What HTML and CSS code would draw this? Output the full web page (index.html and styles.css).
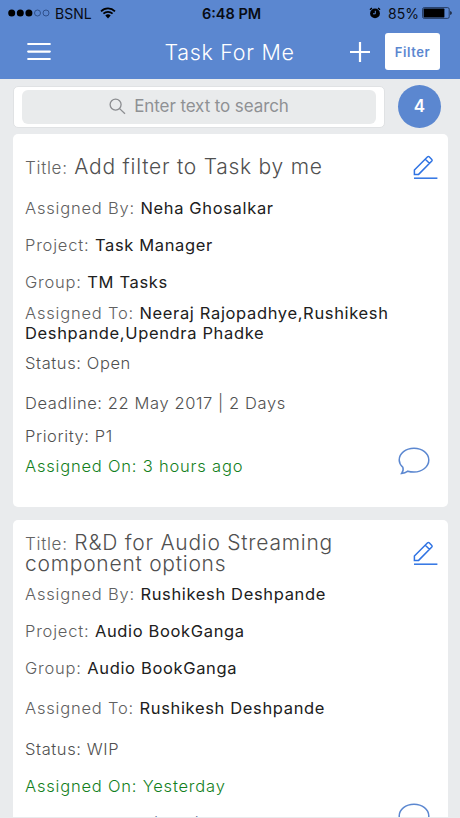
FILE: index.html
```html
<!DOCTYPE html>
<html lang="en">

<head>
    <meta charset="UTF-8">
    <meta name="viewport" content="width=device-width, initial-scale=1.0">
    <title>Task For Me</title>
    <link rel="stylesheet" href="styles.css">
</head>

<body>

    <header class="header">
        <div class="status-bar">
            <div class="status-left">
                <svg class="signal" width="42" height="8" viewBox="0 0 42 8">
                    <circle cx="3.7" cy="4" r="3.5" />
                    <circle cx="12.3" cy="4" r="3.5" />
                    <circle cx="20.9" cy="4" r="3.5" />
                    <circle class="empty" cx="29.5" cy="4" r="3" />
                    <circle class="empty" cx="38" cy="4" r="3" />
                </svg>
                <span class="carrier">BSNL</span>
                <svg class="wifi" width="16" height="12" viewBox="0 0 16 12">
                    <path d="M1 4.3a10 10 0 0 1 14 0M3.4 6.7a6.6 6.6 0 0 1 9.2 0" />
                    <path class="dot" d="M5.3 8.6a3.9 3.9 0 0 1 5.4 0L8 11.4z" />
                </svg>
            </div>
            <span class="clock">6:48 PM</span>
            <div class="status-right">
                <svg class="alarm" width="12" height="12" viewBox="0 0 12 12">
                    <circle cx="6" cy="6.4" r="4.9" />
                    <path class="bells" d="M1 2.7l1.9-1.7M11 2.7L9.1 1" />
                    <path class="hands" d="M6.3 3.8v3H4" />
                </svg>
                <span class="percent">85%</span>
                <svg class="battery" width="31" height="12" viewBox="0 0 31 12">
                    <rect class="shell" x="0.6" y="0.6" width="26.6" height="10.8" rx="1.6" />
                    <rect x="1.6" y="1.6" width="20.8" height="8.8" rx="0.6" />
                    <path d="M28.4 4c1.6.5 1.6 3.5 0 4z" />
                </svg>
            </div>
        </div>
        <div class="nav-bar">
            <svg class="menu" width="24" height="20" viewBox="0 0 24 20">
                <path d="M1.2 2h21.6M1.2 9.6h21.6M1.2 17h21.6" />
            </svg>
            <h1>Task For Me</h1>
            <div class="actions">
                <svg class="add" width="20" height="20" viewBox="0 0 20 20">
                    <path d="M10 0v20M0 10h20" />
                </svg>
                <button type="button" class="filter">Filter</button>
            </div>
        </div>
    </header>

    <div class="search-row">
        <div class="search-box">
            <div class="search-field">
                <svg class="search-icon" width="17" height="17" viewBox="0 0 17 17">
                    <circle cx="6.6" cy="6.6" r="5.5" />
                    <path d="M10.6 10.6l5.4 5.2" />
                </svg>
                <span class="search-text">Enter text to search</span>
            </div>
        </div>
        <div class="count">4</div>
    </div>

    <main class="list">
        <div class="card">
            <div class="edit">
                <svg width="25" height="25" viewBox="0 0 25 25">
                    <path d="M1.4 15L14.6 1.8q.8-.7 1.6 0l2.6 2.6q.7.8 0 1.6L5.6 19.4H1.4zM12.3 4.2l4.1 4.1" />
                    <path d="M1 23.2h23.4" />
                </svg>
            </div>
            <p class="title"><span>Title:</span> Add filter to Task by me</p>
            <p class="field">Assigned By: <b>Neha Ghosalkar</b></p>
            <p class="field">Project: <b>Task Manager</b></p>
            <p class="field">Group: <b>TM Tasks</b></p>
            <p class="field people">Assigned To: <b>Neeraj Rajopadhye,Rushikesh Deshpande,Upendra Phadke</b></p>
            <p class="field info close">Status: Open</p>
            <p class="field info wide">Deadline: 22 May 2017 | 2 Days</p>
            <p class="field info snug">Priority: P1</p>
            <p class="field assigned-on close">Assigned On: 3 hours ago</p>
            <div class="comment">
                <svg width="32" height="28" viewBox="0 0 32 28">
                    <path d="M4.9 20.4C2.6 18.3 1.2 15.7 1.2 13 1.2 6.4 7.8 1.2 16 1.2S30.8 6.4 30.8 13 24.2 25 16 25c-2.2 0-4.2-.2-6.1-.8-1.9 1.4-4.1 2.2-6.3 2.2 1.3-1.6 2-3.6 1.3-6z" />
                </svg>
            </div>
        </div>

        <div class="card second">
            <div class="edit">
                <svg width="25" height="25" viewBox="0 0 25 25">
                    <path d="M1.4 15L14.6 1.8q.8-.7 1.6 0l2.6 2.6q.7.8 0 1.6L5.6 19.4H1.4zM12.3 4.2l4.1 4.1" />
                    <path d="M1 23.2h23.4" />
                </svg>
            </div>
            <p class="title"><span>Title:</span> R&amp;D for Audio Streaming component options</p>
            <p class="field">Assigned By: <b>Rushikesh Deshpande</b></p>
            <p class="field">Project: <b>Audio BookGanga</b></p>
            <p class="field">Group: <b>Audio BookGanga</b></p>
            <p class="field wide">Assigned To: <b>Rushikesh Deshpande</b></p>
            <p class="field info status">Status: WIP</p>
            <p class="field assigned-on">Assigned On: Yesterday</p>
            <p class="field comments">Comments on: (Title) updated</p>
            <div class="comment">
                <svg width="32" height="28" viewBox="0 0 32 28">
                    <path d="M4.9 20.4C2.6 18.3 1.2 15.7 1.2 13 1.2 6.4 7.8 1.2 16 1.2S30.8 6.4 30.8 13 24.2 25 16 25c-2.2 0-4.2-.2-6.1-.8-1.9 1.4-4.1 2.2-6.3 2.2 1.3-1.6 2-3.6 1.3-6z" />
                </svg>
            </div>
        </div>
    </main>

</body>

</html>
```

FILE: styles.css
```css
* {
    box-sizing: border-box;
    margin: 0;
    padding: 0;
}

body {
    height: 818px;
    overflow: hidden;
    background-color: #e9ebed;
    font-family: Inter, Arial, sans-serif;
    color: #606060;
}

svg {
    display: block;
    fill: none;
}

.header {
    height: 79px;
    background-color: #5b87d0;
}

.status-bar {
    display: grid;
    grid-template-columns: 1fr auto 1fr;
    align-items: center;
    height: 26px;
    padding: 0 7px 0 8px;
    font-size: 14px;
    color: #080c14;
}

.status-left,
.status-right {
    display: flex;
    align-items: center;
}

.status-right {
    justify-content: flex-end;
}

.signal,
.battery {
    fill: #000;
}

.signal .empty {
    fill: none;
    stroke: #24437a;
    stroke-width: 0.8;
}

.carrier {
    margin: 0 8px 0 5px;
}

.wifi {
    stroke: #000;
    stroke-width: 1.7;
}

.wifi .dot {
    fill: #000;
    stroke: none;
}

.clock {
    padding-left: 2px;
    font-size: 14.5px;
    font-weight: 600;
}

.alarm {
    fill: #000;
    margin-right: 7px;
}

.alarm .bells {
    stroke: #000;
    stroke-width: 1.5;
}

.alarm .hands {
    fill: none;
    stroke: #5b87d0;
}

.percent {
    margin-right: 3px;
    font-size: 14px;
}

.battery .shell {
    fill: none;
    stroke: #1f3458;
    stroke-width: 0.9;
}

.nav-bar {
    display: grid;
    grid-template-columns: 1fr auto 1fr;
    align-items: center;
    height: 51px;
    padding: 0 20px 0 27px;
}

.menu,
.add {
    stroke: #fff;
    stroke-width: 2.2;
    stroke-linecap: round;
}

.add {
    stroke-linecap: butt;
}

.nav-bar h1 {
    margin-right: 8px;
    font-size: 21.5px;
    font-weight: 350;
    letter-spacing: 0.7px;
    color: #fff;
}

.actions {
    display: flex;
    align-items: center;
    justify-content: flex-end;
    gap: 15px;
}

.filter {
    width: 55px;
    height: 37px;
    border: none;
    border-radius: 3px;
    background-color: #fff;
    font-family: inherit;
    font-size: 13px;
    font-weight: 600;
    letter-spacing: 0.6px;
    color: #5b87d0;
}

.search-row {
    display: flex;
    align-items: center;
    gap: 13px;
    height: 55px;
    padding: 0 19px 0 13px;
}

.search-box {
    flex: 1;
    height: 42px;
    padding: 3px 8px;
    border: 1px solid #e0e2e4;
    border-radius: 5px;
    background-color: #fff;
}

.search-field {
    display: flex;
    align-items: center;
    justify-content: center;
    gap: 8px;
    height: 34px;
    border-radius: 6px;
    background-color: #e9ebec;
    font-size: 17px;
    letter-spacing: -0.1px;
    color: #8f9194;
}

.search-text {
    margin-top: -2px;
}

.search-icon {
    stroke: #8b8d90;
    stroke-width: 1.3;
}

.count {
    width: 43px;
    height: 43px;
    border-radius: 50%;
    background-color: #5b87d0;
    font-size: 17px;
    font-weight: 600;
    line-height: 42px;
    text-align: center;
    color: #fff;
}

.list {
    height: 683px;
    overflow: hidden;
}

.card {
    position: relative;
    width: 435px;
    height: 373px;
    margin: 0 0 13px 13px;
    padding: 22px 12px 0;
    border-radius: 5px;
    background-color: #fff;
}

.card.second {
    padding-top: 12px;
}

.title {
    width: 360px;
    font-size: 21px;
    font-weight: 350;
    line-height: 21px;
    letter-spacing: 0.75px;
    color: #505050;
}

.title span {
    font-size: 17px;
    line-height: 1;
    letter-spacing: 0.7px;
    color: #646464;
}

.field {
    margin-top: 17px;
    font-size: 16.5px;
    font-weight: 350;
    line-height: 20px;
    letter-spacing: 0.8px;
}

.field b {
    font-weight: 400;
    letter-spacing: 0.65px;
    color: #202020;
}

.title + .field {
    margin-top: 21px;
}

.field.people {
    margin-top: 11px;
}

.field.close {
    margin-top: 10px;
}

.field.snug {
    margin-top: 13px;
}

.field.wide {
    margin-top: 20px;
}

.second .title + .field {
    margin-top: 10px;
}

.field.status {
    margin-top: 21px;
}

.info {
    color: #505050;
}

.field.info {
    letter-spacing: 0.6px;
}

.assigned-on {
    color: #12801c;
}

.field.comments {
    margin-top: 17px;
    color: #5f6f95;
}

/* icons pinned to the right side of a card */
.edit,
.comment {
    position: absolute;
}

.edit {
    top: 21px;
    right: 10px;
    stroke: #2f73e3;
    stroke-width: 1.5;
}

.comment {
    top: 313px;
    right: 18px;
    stroke: #5b87d0;
    stroke-width: 1.5;
}

.second .comment {
    top: 283px;
}
```
